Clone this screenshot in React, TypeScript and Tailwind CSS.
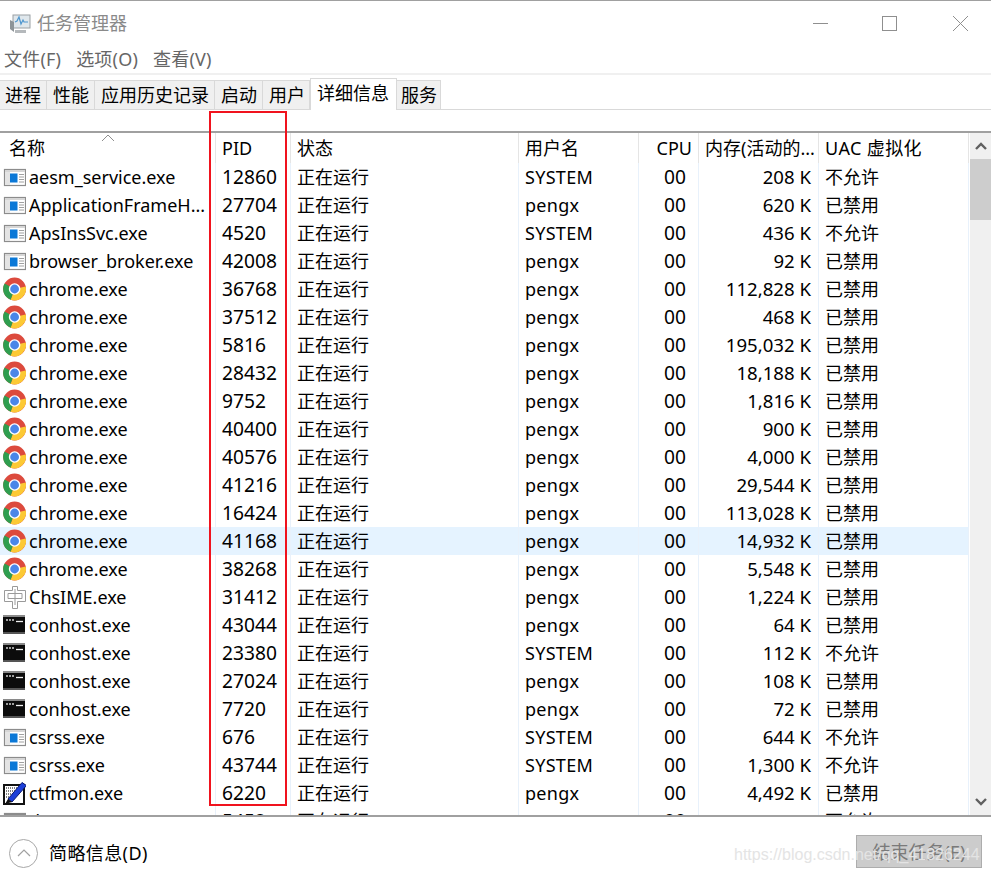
const rows: [string, string, string, string, string, string, string][] = [
  ["w", "aesm_service.exe", "12860", "SYSTEM", "00", "208 K", "不允许"],
  ["w", "ApplicationFrameH...", "27704", "pengx", "00", "620 K", "已禁用"],
  ["w", "ApsInsSvc.exe", "4520", "SYSTEM", "00", "436 K", "不允许"],
  ["w", "browser_broker.exe", "42008", "pengx", "00", "92 K", "已禁用"],
  ["c", "chrome.exe", "36768", "pengx", "00", "112,828 K", "已禁用"],
  ["c", "chrome.exe", "37512", "pengx", "00", "468 K", "已禁用"],
  ["c", "chrome.exe", "5816", "pengx", "00", "195,032 K", "已禁用"],
  ["c", "chrome.exe", "28432", "pengx", "00", "18,188 K", "已禁用"],
  ["c", "chrome.exe", "9752", "pengx", "00", "1,816 K", "已禁用"],
  ["c", "chrome.exe", "40400", "pengx", "00", "900 K", "已禁用"],
  ["c", "chrome.exe", "40576", "pengx", "00", "4,000 K", "已禁用"],
  ["c", "chrome.exe", "41216", "pengx", "00", "29,544 K", "已禁用"],
  ["c", "chrome.exe", "16424", "pengx", "00", "113,028 K", "已禁用"],
  ["c", "chrome.exe", "41168", "pengx", "00", "14,932 K", "已禁用"],
  ["c", "chrome.exe", "38268", "pengx", "00", "5,548 K", "已禁用"],
  ["i", "ChsIME.exe", "31412", "pengx", "00", "1,224 K", "已禁用"],
  ["t", "conhost.exe", "43044", "pengx", "00", "64 K", "已禁用"],
  ["t", "conhost.exe", "23380", "SYSTEM", "00", "112 K", "不允许"],
  ["t", "conhost.exe", "27024", "pengx", "00", "108 K", "已禁用"],
  ["t", "conhost.exe", "7720", "pengx", "00", "72 K", "已禁用"],
  ["w", "csrss.exe", "676", "SYSTEM", "00", "644 K", "不允许"],
  ["w", "csrss.exe", "43744", "SYSTEM", "00", "1,300 K", "不允许"],
  ["p", "ctfmon.exe", "6220", "pengx", "00", "4,492 K", "已禁用"],
  ["g", "dwm.exe", "5452", "LS-844-85", "00", "3,416 K", "不允许"],
];

function RowIcon({ kind }: { kind: string }) {
  if (kind === "c")
    return (
      <svg width="24" height="24" viewBox="0 0 24 24" className="shrink-0">
        <circle cx="12.6" cy="12" r="11.4" fill="#dc4a3d" />
        <path d="M12.6 12 L23.7 9.5 A11.4 11.4 0 0 1 8.6 22.7 Z" fill="#fcc934" />
        <path d="M12.6 12 L8.6 22.7 A11.4 11.4 0 0 1 2.6 6.4 Z" fill="#2f9e4f" />
        <circle cx="12.6" cy="12" r="5.8" fill="#fff" />
        <circle cx="12.6" cy="12" r="4.4" fill="#4a86e8" />
      </svg>
    );
  if (kind === "t")
    return (
      <svg width="24" height="24" viewBox="0 0 24 24" className="shrink-0">
        <rect x="1" y="2" width="22" height="19" fill="#0c0c0c" />
        <rect x="1" y="2" width="22" height="2" fill="#8a8a8a" />
        <rect x="1" y="19" width="22" height="2" fill="#555" />
        <path d="M4 7h2M7 7h2M10 7h2" stroke="#cfcfcf" strokeWidth="1.6" />
        <path d="M14 8.5h7" stroke="#f0f0f0" strokeWidth="1.3" />
      </svg>
    );
  if (kind === "i")
    return (
      <svg width="24" height="24" viewBox="0 0 24 24" className="shrink-0" fill="#fff" stroke="#9a9a9a" strokeWidth="1">
        <path d="M10.5 1.5h5v4h8v11h-8v7h-5v-7h-8v-11h8z" />
        <path d="M6 8.5h14v5h-14zM13 4v16" />
      </svg>
    );
  if (kind === "p")
    return (
      <svg width="24" height="24" viewBox="0 0 24 24" className="shrink-0">
        <rect x="2" y="4" width="20" height="19" fill="#fff" stroke="#111" strokeWidth="2" />
        <path d="M4 7h12M4 10h10M4 13h8M4 16h5" stroke="#555" strokeWidth="1.5" strokeDasharray="1 1" />
        <path d="M6 18 L20 1.5 L24.5 4.5 L10 21 Z" fill="#1c3fd8" stroke="#0a1a70" strokeWidth="1" />
        <path d="M6 18 L3 23 L10 21 Z" fill="#111" />
      </svg>
    );
  return (
    <svg width="24" height="24" viewBox="0 0 24 24" className="shrink-0">
      <rect x="2.5" y="4.5" width="21" height="16" fill="#fff" stroke="#8c8c8c" strokeWidth="1.2" />
      <rect x="3" y="5" width="20" height="2" fill={kind === "g" ? "#8c8c8c" : "#d6d6d6"} />
      <rect x="3" y="7" width="5" height="13" fill="#e4e4e4" />
      <rect x="8" y="8.5" width="7.5" height="9" fill="#0a78d7" />
      <path d="M17 9.5h5M17 12h5M17 14.5h5M17 17h5" stroke="#a0a0a0" strokeWidth="1" />
    </svg>
  );
}

const cols = "grid grid-cols-[216px_75px_228px_120px_60px_120px_150px]";
const cellBorder = "h-full border-r border-[#e8f1fb]";
const headCell = "h-full border-r border-[#e5e5e5] leading-[30px]";

export default function App() {
  return (
    <div
      className="relative h-[873px] w-[991px] overflow-hidden bg-white text-[18px] leading-[28px] text-black"
      style={{ fontFamily: '"Noto Sans", "Noto Sans CJK SC", sans-serif' }}
    >
      <div className="h-[1px] bg-[#a0a0a0]" />
      <div className="flex h-[44px] items-center pl-[9px] text-[#8a8a8a]">
        <svg width="22" height="22" viewBox="0 0 22 22" className="shrink-0">
          <rect x="4" y="3" width="17" height="13" fill="#dfe7ec" stroke="#9aa0a4" />
          <path d="M6 10l2-1 2-4 2 7 2-4 1 2h4" fill="none" stroke="#4f97cf" strokeWidth="1.2" />
          <path d="M1 8l4 2v10l-4-3z" fill="#8d9498" />
          <path d="M6 18h11v3H6z" fill="#b5b9bc" />
        </svg>
        <span className="ml-[6px] text-[18px]">任务管理器</span>
        <div className="ml-auto mr-[23px] flex items-center">
          <div className="h-px w-[15px] bg-[#8f8f8f]" />
          <div className="ml-[54px] h-[15px] w-[15px] border border-[#8f8f8f]" />
          <svg width="15" height="15" viewBox="0 0 15 15" fill="none" stroke="#8f8f8f" strokeWidth="1" className="ml-[56px]">
            <path d="M0 0l15 15M15 0L0 15" />
          </svg>
        </div>
      </div>
      <div className="flex h-[28px] items-center gap-[15px] pl-[4px] tracking-[0.2px] text-[#666]">
        <span>文件(F)</span>
        <span>选项(O)</span>
        <span>查看(V)</span>
      </div>
      <div className="h-[2px] bg-[#f0f0f0]" />
      <div className="flex h-[35px] items-end border-b border-[#d9d9d9]">
        <div className="-mb-px flex h-[30px] w-[47px] items-center border border-l-0 border-[#d9d9d9] bg-[#f0f0f0] pl-[5px]">进程</div>
        <div className="-mb-px flex h-[30px] w-[48px] items-center border border-l-0 border-[#d9d9d9] bg-[#f0f0f0] pl-[6px]">性能</div>
        <div className="-mb-px flex h-[30px] w-[120px] items-center border border-l-0 border-[#d9d9d9] bg-[#f0f0f0] pl-[6px]">应用历史记录</div>
        <div className="-mb-px flex h-[30px] w-[48px] items-center border border-l-0 border-[#d9d9d9] bg-[#f0f0f0] pl-[6px]">启动</div>
        <div className="-mb-px flex h-[30px] w-[47px] items-center border border-l-0 border-[#d9d9d9] bg-[#f0f0f0] pl-[6px]">用户</div>
        <div className="-mb-px flex h-[32px] w-[87px] items-center border-x border-t border-[#d9d9d9] bg-white pb-[3px] pl-[6px]">详细信息</div>
        <div className="-mb-px flex h-[30px] w-[44px] items-center border border-l-0 border-[#d9d9d9] bg-[#f0f0f0] pl-[4px]">服务</div>
      </div>
      <div className="h-[21px]" />
      <div className="h-[2px] bg-[#a0a0a0]" />
      <div className="relative flex h-[682px] overflow-hidden">
        <div className="w-[969px] shrink-0">
          <div className={`${cols} relative h-[30px] items-center`}>
            <svg width="14" height="8" viewBox="0 0 14 8" fill="none" stroke="#8f8f8f" className="absolute left-[101px] top-[1px]">
              <path d="M1 7l6-6 6 6" />
            </svg>
            <div className={`${headCell} pl-[9px]`}>名称</div>
            <div className={`${headCell} pl-[6px]`}>PID</div>
            <div className={`${headCell} pl-[6px]`}>状态</div>
            <div className={`${headCell} pl-[6px]`}>用户名</div>
            <div className={`${headCell} pr-[6px] text-right`}>CPU</div>
            <div className={`${headCell} truncate pl-[6px]`}>内存(活动的...</div>
            <div className={`${headCell} pl-[6px] tracking-[0.4px]`}>UAC 虚拟化</div>
          </div>
          {rows.map((r, i) => (
            <div key={i} className={`${cols} h-[28px] items-center ${r[2] === "41168" ? "bg-[#e5f3ff]" : ""}`}>
              <div className={`${cellBorder} flex items-center gap-[3px] pl-[2px] whitespace-nowrap`}>
                <RowIcon kind={r[0]} />
                <span>{r[1]}</span>
              </div>
              <div className={`${cellBorder} pl-[6px] text-[19.2px]`}>{r[2]}</div>
              <div className={`${cellBorder} pl-[6px]`}>正在运行</div>
              <div className={`${cellBorder} pl-[6px] tracking-[0.3px]`}>{r[3]}</div>
              <div className={`${cellBorder} pr-[12px] text-right text-[19.2px]`}>{r[4]}</div>
              <div className={`${cellBorder} pr-[7px] text-right text-[18.6px]`}>{r[5]}</div>
              <div className={`${cellBorder} pl-[6px]`}>{r[6]}</div>
            </div>
          ))}
        </div>
        <div className="ml-px flex w-[21px] shrink-0 flex-col bg-[#f0f0f0]">
          <div className="flex h-[26px] items-center justify-center">
            <svg width="12" height="8" viewBox="0 0 12 8" fill="none" stroke="#606060" strokeWidth="2.4">
              <path d="M1 7l5-5 5 5" />
            </svg>
          </div>
          <div className="h-[61px] bg-[#cdcdcd]" />
          <div className="mt-auto flex h-[26px] items-center justify-center">
            <svg width="12" height="8" viewBox="0 0 12 8" fill="none" stroke="#606060" strokeWidth="2.4">
              <path d="M1 1l5 5 5-5" />
            </svg>
          </div>
        </div>
      </div>
      <div className="h-[2px] bg-[#a0a0a0]" />
      <div className="flex h-[56px] items-center pl-[9px] pr-[9px] pt-[16px]">
        <div className="flex h-[29px] w-[29px] items-center justify-center rounded-full border border-[#a8a8a8]">
          <svg width="14" height="8" viewBox="0 0 14 8" fill="none" stroke="#a0a0a0" strokeWidth="1.2">
            <path d="M1 7l6-6 6 6" />
          </svg>
        </div>
        <span className="ml-[11px] tracking-[0.4px]">简略信息(D)</span>
        <div className="mb-[3px] ml-auto flex h-[33px] w-[126px] items-center justify-center border border-[#adadad] bg-[#cccccc] text-[#7a7a7a]">
          结束任务(E)
        </div>
      </div>
      <div className="pointer-events-none absolute left-[209px] top-[111px] h-[695px] w-[78px] border-2 border-[#f0131e]" />
      <div
        className="pointer-events-none absolute left-[734px] top-[843px] text-[16px] leading-[24px] text-[#e4e4e4]"
        style={{ fontFamily: '"Liberation Sans", sans-serif' }}
      >
        https://blog.csdn.net/qq_41826244
      </div>
    </div>
  );
}
